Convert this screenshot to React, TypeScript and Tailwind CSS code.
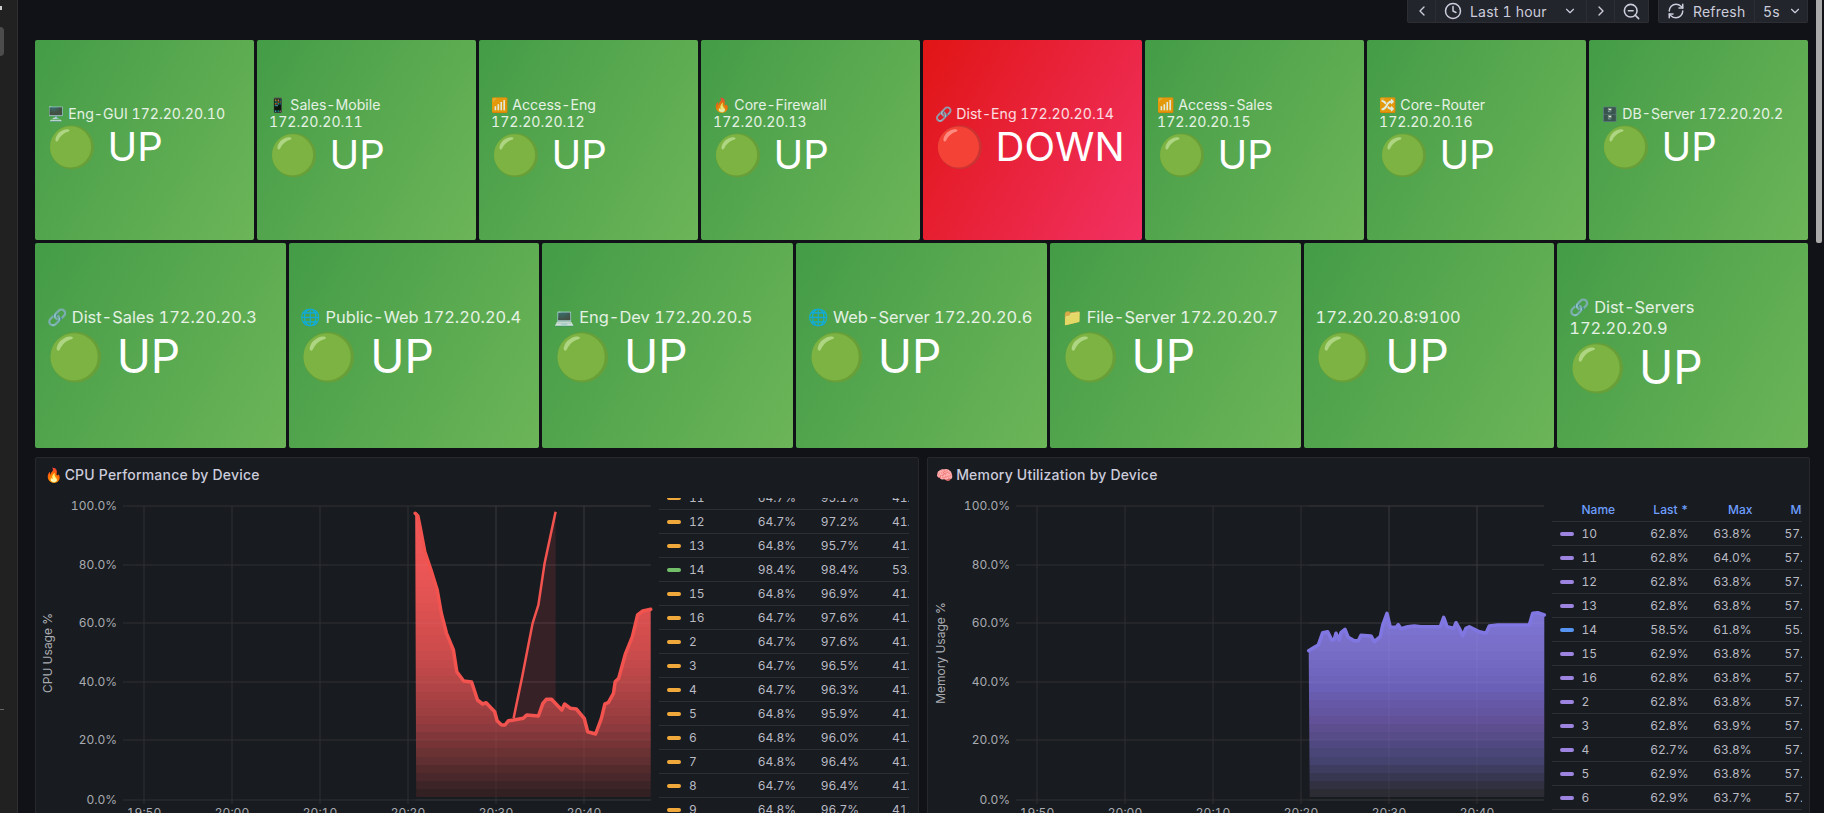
import React from "react";
import { ChevronLeft, ChevronRight, ChevronDown, Clock, ZoomOut, RefreshCw } from "lucide-react";

type Tile = { icon: string; name: string; ip: string; down?: boolean };
const row1: Tile[] = [
  { icon: "🖥️", name: "Eng-GUI", ip: "172.20.20.10" },
  { icon: "📱", name: "Sales-Mobile", ip: "172.20.20.11" },
  { icon: "📶", name: "Access-Eng", ip: "172.20.20.12" },
  { icon: "🔥", name: "Core-Firewall", ip: "172.20.20.13" },
  { icon: "🔗", name: "Dist-Eng", ip: "172.20.20.14", down: true },
  { icon: "📶", name: "Access-Sales", ip: "172.20.20.15" },
  { icon: "🔀", name: "Core-Router", ip: "172.20.20.16" },
  { icon: "🗄️", name: "DB-Server", ip: "172.20.20.2" },
];
const row2: Tile[] = [
  { icon: "🔗", name: "Dist-Sales", ip: "172.20.20.3" },
  { icon: "🌐", name: "Public-Web", ip: "172.20.20.4" },
  { icon: "💻", name: "Eng-Dev", ip: "172.20.20.5" },
  { icon: "🌐", name: "Web-Server", ip: "172.20.20.6" },
  { icon: "📁", name: "File-Server", ip: "172.20.20.7" },
  { icon: "", name: "", ip: "172.20.20.8:9100" },
  { icon: "🔗", name: "Dist-Servers", ip: "172.20.20.9" },
];

const cpuRows = [
  ["11", "64.7%", "95.1%", "41.2%"], ["12", "64.7%", "97.2%", "41.2%"], ["13", "64.8%", "95.7%", "41.2%"],
  ["14", "98.4%", "98.4%", "53.1%"], ["15", "64.8%", "96.9%", "41.2%"], ["16", "64.7%", "97.6%", "41.2%"],
  ["2", "64.7%", "97.6%", "41.2%"], ["3", "64.7%", "96.5%", "41.2%"], ["4", "64.7%", "96.3%", "41.2%"],
  ["5", "64.8%", "95.9%", "41.2%"], ["6", "64.8%", "96.0%", "41.2%"], ["7", "64.8%", "96.4%", "41.2%"],
  ["8", "64.7%", "96.4%", "41.2%"], ["9", "64.8%", "96.7%", "41.2%"],
];
const memRows = [
  ["10", "62.8%", "63.8%", "57.1%"], ["11", "62.8%", "64.0%", "57.1%"], ["12", "62.8%", "63.8%", "57.1%"],
  ["13", "62.8%", "63.8%", "57.1%"], ["14", "58.5%", "61.8%", "55.1%"], ["15", "62.9%", "63.8%", "57.1%"],
  ["16", "62.8%", "63.8%", "57.1%"], ["2", "62.8%", "63.8%", "57.1%"], ["3", "62.8%", "63.9%", "57.1%"],
  ["4", "62.7%", "63.8%", "57.1%"], ["5", "62.9%", "63.8%", "57.1%"], ["6", "62.9%", "63.7%", "57.1%"],
];

function TileCard({ t, big }: { t: Tile; big?: boolean }) {
  const bg = t.down
    ? "bg-[linear-gradient(120deg,#e01515,#f23163)]"
    : "bg-[linear-gradient(120deg,#449c47,#6cb558)]";
  const wraps = big ? t.name === "Dist-Servers" : t.name.length + t.ip.length > 21;
  return (
    <div className={`${bg} flex-1 min-w-0 rounded-[2px] flex flex-col justify-center tabular-nums ${big ? "px-[12px] text-[16.4px] leading-[21px]" : "px-[12px] text-[14.1px] leading-[17px] pb-[5px]"} text-white/85`}>
      <div className="whitespace-nowrap">
        {t.icon ? `${t.icon} ` : ""}
        {t.name ? `${t.name} ` : ""}
        {wraps && <br />}
        {t.ip}
      </div>
      <div className={`whitespace-nowrap text-white ${big ? "text-[46px] leading-[56px]" : "text-[40px] leading-[49px]"}`}>
        {t.down ? "🔴 DOWN" : "🟢 UP"}
      </div>
    </div>
  );
}

function Legend({ rows, color, alt, altIdx, header, offset }: { rows: string[][]; color: string; alt: string; altIdx: string; header?: boolean; offset: number }) {
  return (
    <div className="w-[250px] h-[316px] overflow-hidden shrink-0 text-[12px] tabular-nums text-[#b9bac4]">
      <div style={{ marginTop: offset }}>
        {header && (
          <div className="h-[24px] flex items-center border-b border-[#2d2f34] font-medium text-[#6e9fff] whitespace-nowrap">
            <span className="w-[30px] shrink-0" />
            <span className="w-[57px] shrink-0">Name</span>
            <span className="w-[50px] shrink-0 text-right">Last *</span>
            <span className="w-[64px] shrink-0 text-right">Max</span>
            <span className="ml-[38px] shrink-0">Min</span>
          </div>
        )}
        {rows.map((r) => (
          <div key={r[0]} className="h-[24px] flex items-center border-b border-[#2d2f34]">
            <span className="w-[30px] pl-[8px] shrink-0">
              <span className={`block w-[14px] h-[4px] rounded-[2px] ${r[0] === altIdx ? alt : color}`} />
            </span>
            <span className="w-[57px] shrink-0">{r[0]}</span>
            <span className="w-[50px] shrink-0 text-right">{r[1]}</span>
            <span className="w-[63px] shrink-0 text-right">{r[2]}</span>
            <span className="ml-[33px] shrink-0 whitespace-nowrap">{r[3]}</span>
          </div>
        ))}
      </div>
    </div>
  );
}

const cpuZ: number[][] = [[44,100],[52,108],[60,150],[72,215],[90,270],[108,330],[120,400],[135,460],[155,510],[165,575],[185,603],[208,606],[225,660],[240,672],[250,668],[275,695],[282,722],[295,735],[305,735],[315,722],[330,720],[358,715],[368,705],[402,708],[415,670],[425,658],[440,658],[470,690],[478,672],[495,685],[512,687],[535,715],[545,755],[568,762],[585,715],[595,672],[605,668],[620,640],[625,605],[635,595],[655,520],[675,470],[690,405],[705,393],[728,388]];
const cpu2Z: number[][] = [[330,715],[355,590],[370,510],[385,430],[402,375],[420,250],[452,95]];
const fx = (p: number[]) => [+(400 + p[0] / 2.904 - 123).toFixed(1), +(480 + p[1] / 3 - 490).toFixed(1)];
const cpuPts = cpuZ.map(fx);
const cpu2Pts = cpu2Z.map(fx);
const mA: number[][] = [[1163,602],[1175,595],[1192,585],[1205,548],[1220,545],[1232,570],[1240,568],[1245,550],[1255,570],[1260,548],[1272,538],[1282,562],[1300,572],[1312,572],[1320,556],[1350,558],[1360,575],[1378,560],[1385,525],[1398,490],[1408,532],[1425,532],[1432,524],[1440,536],[1460,530],[1480,528]];
const mB: number[][] = [[0,530],[58,530],[68,502],[78,530],[98,535],[105,518],[115,535],[125,557],[135,535],[145,530],[175,545],[195,550],[205,528],[230,525],[325,525],[335,490],[350,488],[370,495]];
const memPts = [
  ...mA.map((p) => [+(920 + p[0] / 3 - 1015).toFixed(1), +(450 + p[1] / 3 - 490).toFixed(1)]),
  ...mB.map((p) => [+(1420 + p[0] / 3 - 1015).toFixed(1), +(450 + p[1] / 3 - 490).toFixed(1)]),
];
const path = (pts: number[][]) => pts.map((p, i) => `${i ? "L" : "M"}${p[0]} ${p[1]}`).join(" ");

const bandStops = (cols: number[][], id: string) => {
  const out: React.ReactElement[] = [];
  const n = 36;
  for (let i = 0; i < n; i++) {
    const t = i / (n - 1);
    const s = t * (cols.length - 1);
    const a = Math.min(Math.floor(s), cols.length - 2);
    const f = s - a;
    const c = cols[a].map((v, k) => Math.round(v + (cols[a + 1][k] - v) * f));
    const col = `rgb(${c[0]},${c[1]},${c[2]})`;
    out.push(<stop key={id + i + "a"} offset={i / n} stopColor={col} />);
    out.push(<stop key={id + i + "b"} offset={(i + 1) / n} stopColor={col} />);
  }
  return out;
};

function Chart({ pts, pts2, stroke, cols, id, ylabel }: { pts: number[][]; pts2?: number[][]; stroke: string; cols: number[][]; id: string; ylabel: string }) {
  const ys = [16, 75, 133, 192, 250, 310];
  const labels = ["100.0%", "80.0%", "60.0%", "40.0%", "20.0%", "0.0%"];
  const xs = [21, 109, 197, 285, 373, 461];
  const xl = ["19:50", "20:00", "20:10", "20:20", "20:30", "20:40"];
  const first = pts[0];
  const last = pts[pts.length - 1];
  const area = `${path(pts)} L${last[0]} 307 L${first[0] + 1} 307 Z`;
  return (
    <svg width="528" height="333" viewBox="0 0 528 333" className="shrink-0 overflow-visible tabular-nums">
      <defs>
        <linearGradient id={id} gradientUnits="userSpaceOnUse" x1="0" y1="16" x2="0" y2="307">
          {bandStops(cols, id)}
        </linearGradient>
      </defs>
      {ys.map((y) => <line key={y} x1="0" x2="528" y1={y} y2={y} stroke="#2e3034" />)}
      {xs.map((x) => <line key={x} x1={x} x2={x} y1="16" y2="314" stroke="#2e3034" />)}
      {pts2 && <path d={`${path(pts2)} L${pts2[pts2.length - 1][0]} 307 L${pts2[0][0]} 307 Z`} fill="#f2495c" fillOpacity="0.14" />}
      <path d={area} fill={`url(#${id})`} />
      {ys.map((y) => <line key={"o" + y} x1={first[0]} x2={last[0]} y1={y} y2={y} stroke="#ffffff" strokeOpacity="0.05" />)}
      {xs.map((x) => x > first[0] ? <line key={"v" + x} x1={x} x2={x} y1="16" y2="307" stroke="#ffffff" strokeOpacity="0.05" /> : null)}
      {pts2 && <path d={path(pts2)} stroke={stroke} strokeWidth="2.5" fill="none" />}
      <path d={path(pts)} stroke={stroke} strokeWidth="3.5" fill="none" strokeLinejoin="round" strokeLinecap="round" />
      {ys.map((y, i) => <text key={y} x="-6" y={y + 4} textAnchor="end" fontSize="12" fill="#a9abb2">{labels[i]}</text>)}
      {xs.map((x, i) => <text key={x} x={x} y="327" textAnchor="middle" fontSize="12" fill="#a9abb2">{xl[i]}</text>)}
      <text transform="translate(-71 163) rotate(-90)" textAnchor="middle" fontSize="12" fill="#a9abb2">{ylabel}</text>
    </svg>
  );
}

function Panel({ emoji, title, children }: { emoji: string; title: string; children: React.ReactNode }) {
  return (
    <div className="flex-1 min-w-0 h-[400px] bg-[#181b1f] border border-[#26282c] rounded-[2px]">
      <div className="h-[32px] flex items-center pl-[9px] text-[14px] font-medium tracking-[0.2px] text-[#ccccdc]">
        <span className="mr-[2px]">{emoji}</span>{title}
      </div>
      {children}
    </div>
  );
}

export default function App() {
  return (
    <div className="flex h-[813px] w-full overflow-hidden bg-[#111217] font-['Inter','Noto_Color_Emoji',sans-serif]">
      <div className="w-[18px] shrink-0 bg-[#212121] border-r border-[#2f2f2f] flex flex-col">
        <div className="w-[2px] h-[4px] mt-[6px] bg-[#ccc]" />
        <div className="w-[4px] h-[29px] mt-[17px] rounded-r-[4px] bg-[#4c4c4c]" />
        <div className="w-[4px] h-px mt-[653px] bg-[#666]" />
      </div>
      <div className="flex-1 min-w-0 pl-[17px] pr-[8px]">
        <div className="h-[23px] mb-[17px] flex justify-end gap-[9px] text-[14px] tracking-[0.2px] text-[#ccccdc] tabular-nums">
          <div className="h-[23px] flex items-center bg-[#22252b] border border-t-0 border-[#2c2e33] rounded-b-[2px]">
            <span className="w-[27px] flex justify-center"><ChevronLeft size={16} /></span>
            <span className="w-[151px] h-full flex items-center pl-[8px] border-l border-[#2c2e33] whitespace-nowrap">
              <Clock size={18} /><span className="ml-[8px]">Last 1 hour</span><ChevronDown size={14} className="ml-[16px]" />
            </span>
            <span className="w-[28px] h-full flex items-center justify-center border-l border-[#2c2e33]"><ChevronRight size={16} /></span>
            <span className="w-[34px] h-full flex items-center justify-center border-l border-[#2c2e33]"><ZoomOut size={19} /></span>
          </div>
          <div className="h-[23px] flex items-center bg-[#22252b] border border-t-0 border-[#2c2e33] rounded-b-[2px]">
            <span className="w-[95px] h-full flex items-center pl-[8px]">
              <RefreshCw size={18} /><span className="ml-[8px]">Refresh</span>
            </span>
            <span className="w-[53px] h-full flex items-center pl-[8px] border-l border-[#2c2e33]">5s<ChevronDown size={14} className="ml-[8px]" /></span>
          </div>
        </div>
        <div className="flex gap-[3px] h-[200px]">
          {row1.map((t) => <TileCard key={t.ip} t={t} />)}
        </div>
        <div className="flex gap-[3px] h-[205px] mt-[3px]">
          {row2.map((t) => <TileCard key={t.ip} t={t} big />)}
        </div>
        <div className="flex gap-[8px] mt-[9px] -mr-[2px]">
          <Panel emoji="🔥" title="CPU Performance by Device">
            <div className="flex pl-[87px]">
              <Chart pts={cpuPts} pts2={cpu2Pts} stroke="#f2534f" id="cpuFill" ylabel="CPU Usage %"
                cols={[[243,88,88],[240,86,86],[232,84,84],[218,80,80],[205,76,76],[178,68,70],[148,60,63],[100,48,50],[50,32,35]]} />
              <div className="ml-[8px] mt-[8px]">
                <Legend rows={cpuRows} color="bg-[#f2a93b]" alt="bg-[#73bf69]" altIdx="14" offset={-12} />
              </div>
            </div>
          </Panel>
          <Panel emoji="🧠" title="Memory Utilization by Device">
            <div className="flex pl-[88px]">
              <Chart pts={memPts} stroke="#8177e2" id="memFill" ylabel="Memory Usage %"
                cols={[[126,116,212],[126,116,212],[126,116,212],[126,116,212],[120,110,200],[106,96,184],[98,80,150],[70,68,115],[44,44,52]]} />
              <div className="ml-[8px] mt-[8px]">
                <Legend rows={memRows} header color="bg-[#9d84e0]" alt="bg-[#5794f2]" altIdx="14" offset={0} />
              </div>
            </div>
          </Panel>
        </div>
      </div>
      <div className="w-[8px] shrink-0 flex flex-col">
        <div className="w-[6px] h-[243px] bg-[#a9a9a9] rounded-b-[2px]" />
      </div>
    </div>
  );
}
